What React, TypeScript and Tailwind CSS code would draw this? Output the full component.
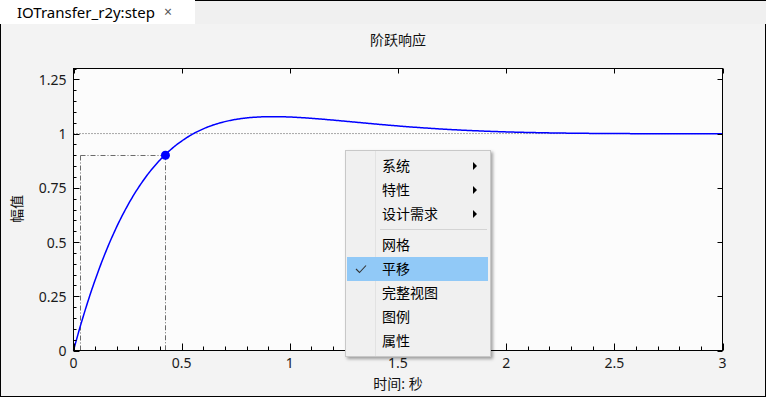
import React from 'react';

const X0 = 73.5;
const X1 = 722.5;
const Y0 = 350.5;
const Y1 = 68.5;

const sx = (t: number) => X0 + (t / 3) * (X1 - X0);
const sy = (v: number) => Y0 - (v / 1.3) * (Y0 - Y1);

// step response of the transfer function (fitted)
function step(t: number) {
  return 1 - Math.exp(-2.4 * t) * (Math.cos(1.6 * t) - 0.8125 * Math.sin(1.6 * t));
}

const curve = Array.from({ length: 601 }, (_, i) => {
  const t = (3 * i) / 600;
  return `${i === 0 ? 'M' : 'L'}${sx(t).toFixed(2)},${sy(step(t)).toFixed(2)}`;
}).join(' ');

const xMinor = Array.from({ length: 31 }, (_, i) => i / 10);
const yMinor = Array.from({ length: 27 }, (_, i) => i * 0.05);
const xMajor = [0, 0.5, 1, 1.5, 2, 2.5, 3];
const yMajor = [0, 0.25, 0.5, 0.75, 1, 1.25];
const xLabels = ['0', '0.5', '1', '1.5', '2', '2.5', '3'];
const yLabels = ['0', '0.25', '0.5', '0.75', '1', '1.25'];

const T10 = 0.028;
const T90 = 0.425;

const FONT = "'Noto Sans', 'Noto Sans CJK SC', sans-serif";

function StepChart() {
  return (
    <svg width={732} height={304} viewBox="33 68 732 304" className="block">
      <rect x={X0} y={Y1} width={X1 - X0} height={Y0 - Y1} fill="#fcfcfc" />

      {/* steady state line */}
      <line x1={X0} y1={sy(1)} x2={X1} y2={sy(1)} stroke="#555" strokeDasharray="1 2" />

      {/* rise time markers */}
      <g stroke="#6b6b6b" strokeDasharray="5 2 1 2" fill="none">
        <line x1={Math.round(sx(T10)) + 0.5} y1={Math.round(sy(0.9)) + 0.5} x2={sx(T90)} y2={Math.round(sy(0.9)) + 0.5} />
        <line x1={Math.round(sx(T10)) + 0.5} y1={Math.round(sy(0.9)) + 0.5} x2={Math.round(sx(T10)) + 0.5} y2={Y0} />
        <line x1={Math.round(sx(T90)) + 0.5} y1={sy(0.9)} x2={Math.round(sx(T90)) + 0.5} y2={Y0} />
      </g>

      <path d={curve} fill="none" stroke="#0000ff" strokeWidth={1.5} />
      <circle cx={sx(T90)} cy={sy(0.9)} r={4.5} fill="#0000ff" />

      {/* ticks */}
      <g stroke="#000" strokeWidth={1}>
        {xMinor.map((t) => {
          const x = Math.round(sx(t)) + 0.5;
          const major = Math.abs(t * 2 - Math.round(t * 2)) < 1e-6;
          return <line key={'xm' + t} x1={x} y1={Y0} x2={x} y2={Y0 - (major ? 7 : 4)} />;
        })}
        {yMinor.map((v) => {
          const y = Math.round(sy(v)) + 0.5;
          const major = Math.abs(v * 4 - Math.round(v * 4)) < 1e-6;
          return <line key={'ym' + v} x1={X0} y1={y} x2={X0 + (major ? 6 : 3)} y2={y} />;
        })}
        {xMajor.map((t) => {
          const x = Math.round(sx(t)) + 0.5;
          return <line key={'xt' + t} x1={x} y1={Y1} x2={x} y2={Y1 + 5} />;
        })}
        {yMajor.map((v) => {
          const y = Math.round(sy(v)) + 0.5;
          return <line key={'yt' + v} x1={X1} y1={y} x2={X1 - 5} y2={y} />;
        })}
      </g>

      <rect x={X0} y={Y1} width={X1 - X0} height={Y0 - Y1} fill="none" stroke="#000" />

      {/* tick labels */}
      <g fontFamily={FONT} fontSize={14} fill="#1a1a1a">
        {yMajor.map((v, i) => (
          <text key={'yl' + v} x={66.5} y={sy(v)} textAnchor="end" dominantBaseline="central">
            {yLabels[i]}
          </text>
        ))}
        {xMajor.map((t, i) => (
          <text key={'xl' + t} x={sx(t)} y={362.5} textAnchor="middle" dominantBaseline="central">
            {xLabels[i]}
          </text>
        ))}
      </g>
    </svg>
  );
}

function Arrow() {
  return (
    <svg width={5} height={8} viewBox="0 0 5 8" className="mr-[10px]">
      <path d="M0 0 L4 4 L0 8 Z" fill="#000" />
    </svg>
  );
}

function MenuItem({ label, sub, checked, active }: { label: string; sub?: boolean; checked?: boolean; active?: boolean }) {
  return (
    <div
      className={`relative ml-[1px] mr-[2px] flex h-[24px] items-center ${active ? 'bg-[#91c9f7]' : ''}`}
    >
      <div className="flex w-[35px] items-center pl-[8px]">
        {checked && (
          <svg width={12} height={10} viewBox="0 0 12 10">
            <path d="M1 5 L4.5 8.5 L11 1.5" fill="none" stroke="#333" strokeWidth={1.1} />
          </svg>
        )}
      </div>
      <span className="flex-1 text-[14px] leading-none text-black">{label}</span>
      {sub && <Arrow />}
    </div>
  );
}

function ContextMenu() {
  return (
    <div className="absolute left-[345px] top-[150px] w-[146px] border border-[#c8c8c8] bg-[#f0f0f0] py-[3px] shadow-[2px_2px_3px_rgba(0,0,0,0.35)]">
      <div className="absolute bottom-0 left-[29px] top-0 w-px bg-[#e2e2e2]" />
      <MenuItem label="系统" sub />
      <MenuItem label="特性" sub />
      <MenuItem label="设计需求" sub />
      <div className="relative flex h-[7px] items-center pl-[34px] pr-[3px]">
        <div className="h-px flex-1 bg-[#d4d4d4]" />
      </div>
      <MenuItem label="网格" />
      <MenuItem label="平移" checked active />
      <MenuItem label="完整视图" />
      <MenuItem label="图例" />
      <MenuItem label="属性" />
    </div>
  );
}

export default function App() {
  return (
    <div
      className="relative flex h-[397px] w-[766px] flex-col overflow-hidden bg-[#f3f3f3]"
      style={{ fontFamily: "'Noto Sans', 'Noto Sans CJK SC', sans-serif" }}
    >
      {/* tab strip */}
      <div className="flex h-[24px] shrink-0">
        <div className="flex w-[195px] items-center bg-white pl-[17px]">
          <span className="text-[15px] leading-none text-black">IOTransfer_r2y:step</span>
          <span className="ml-[9px] text-[14px] leading-none text-[#555]">×</span>
        </div>
        <div className="flex-1 border-t border-black bg-[#f0f0f0]" />
      </div>

      {/* chart body */}
      <div className="flex flex-1 flex-col border-x border-b border-black bg-[#f3f3f3]">
        <div className="flex h-[44px] items-start justify-center pl-[30px] pt-[6px]">
          <span className="text-[14px] leading-[20px] text-[#111]">阶跃响应</span>
        </div>
        <div className="flex">
          <div className="flex w-[32px] items-center justify-center pb-[22px]">
            <span className="-rotate-90 whitespace-nowrap text-[14px] leading-none text-[#111]">幅值</span>
          </div>
          <StepChart />
        </div>
        <div className="flex flex-1 items-center justify-center pl-[30px]">
          <span className="text-[14px] leading-none text-[#111]">时间: 秒</span>
        </div>
      </div>

      <ContextMenu />
    </div>
  );
}
